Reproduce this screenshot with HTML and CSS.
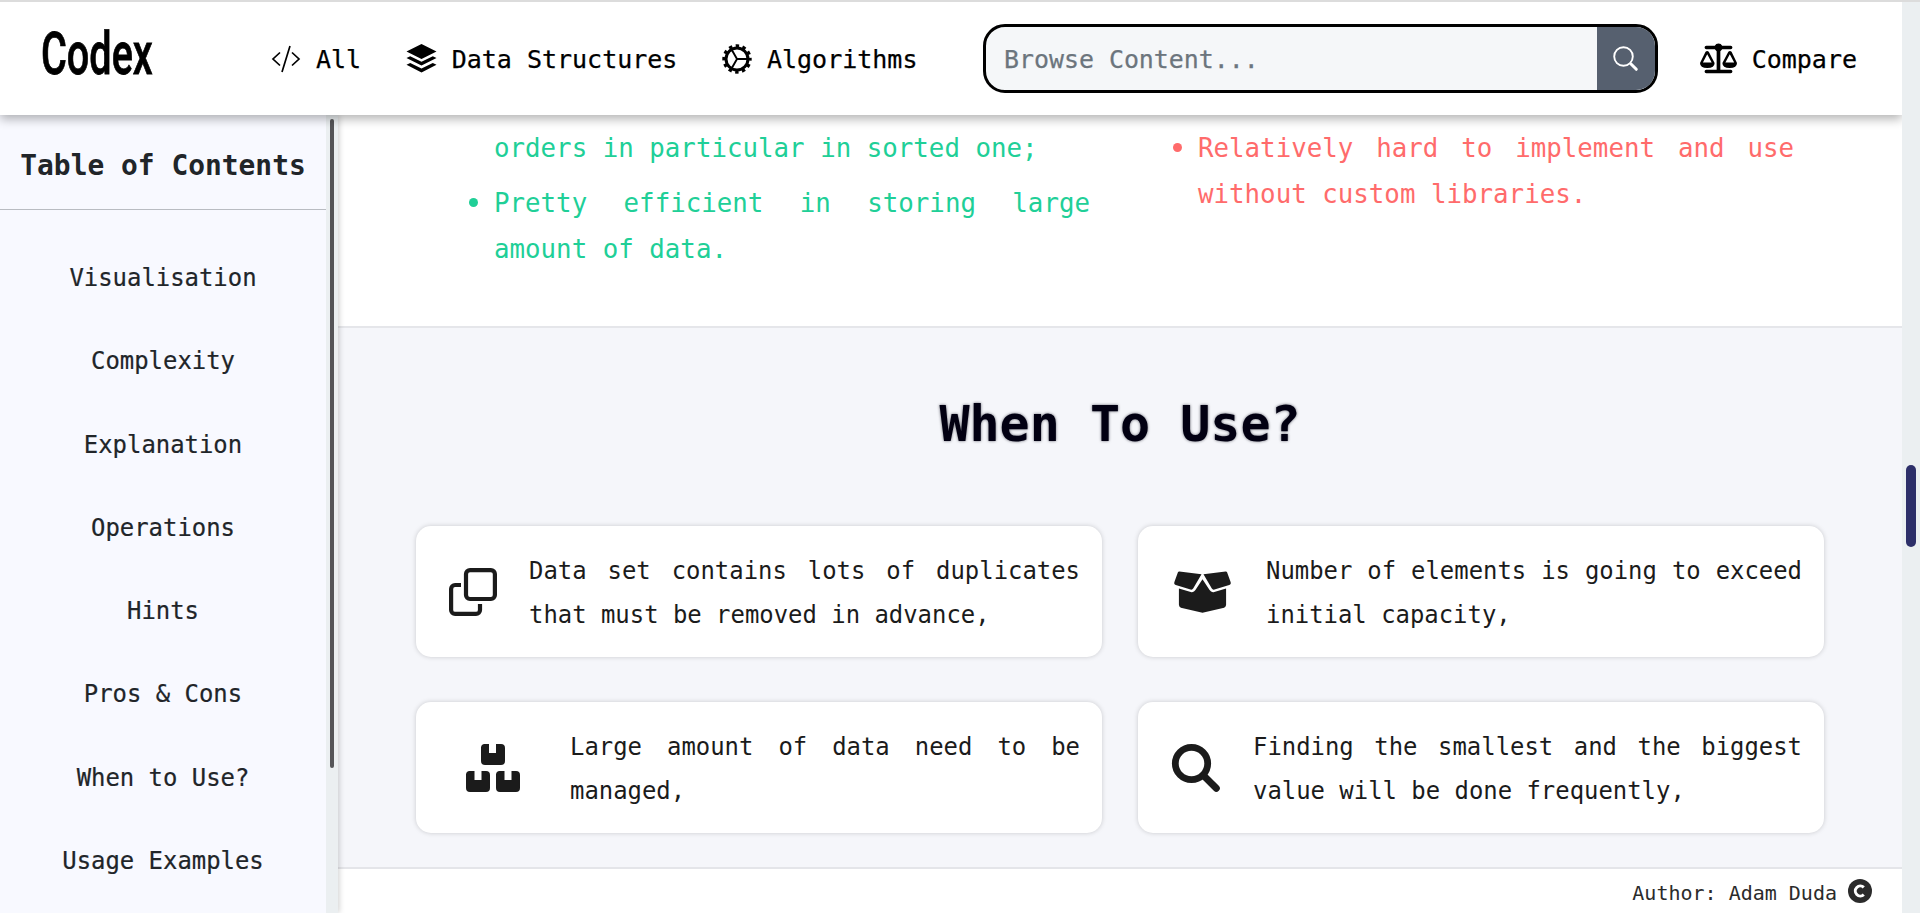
FILE: index.html
```html
<!DOCTYPE html>
<html lang="en">
<head>
<meta charset="utf-8">
<title>Codex</title>
<link rel="stylesheet" href="styles.css">
</head>
<body>
<header class="topbar">
  <div class="brand"><span class="brand-text">Codex</span></div>
  <nav class="nav">
    <a class="nav-item nav-all"><svg class="ico-code" viewBox="0 0 30 32" fill="none" stroke="currentColor" stroke-width="1.7"><path d="M9 9.500 2 16 9 22.500M21 9.500l7 6.500-7 6.500M19 3 11 29"/></svg><span>All</span></a>
    <a class="nav-item nav-ds"><svg class="ico-layers" viewBox="0 0 30 29" fill="currentColor"><path d="M15 0 30 7.500 15 15 0 7.500zM3.700 12.200 15 17.800l11.300-5.600L30 14 15 21.500 0 14zM3.700 18.900 15 24.500l11.300-5.600L30 20.700 15 28.500 0 20.700z"/></svg><span>Data Structures</span></a>
    <a class="nav-item nav-alg"><svg class="ico-gear" viewBox="0 0 30 30" fill="none" stroke="currentColor"><circle cx="15" cy="15" r="11" stroke-width="3"/><circle cx="15" cy="15" r="13.200" stroke-width="3" stroke-dasharray="3.456 3.456" stroke-dashoffset="1.728"/><path stroke-width="1.900" d="M15 15h10M15 15 10 6.300M15 15l-5 8.700"/></svg><span>Algorithms</span></a>
  </nav>
  <div class="search">
    <input class="search-input" placeholder="Browse Content...">
    <button class="search-btn" aria-label="Search"><svg class="ico-find" viewBox="0 0 25 25" fill="none" stroke="currentColor" stroke-linecap="round"><circle cx="10.500" cy="10.500" r="9.300" stroke-width="1.900"/><path stroke-width="3" d="m18 18 5.300 5.300"/></svg></button>
  </div>
  <a class="nav-item nav-cmp"><svg class="ico-scale" viewBox="0 0 38 30" fill="currentColor"><path d="M6.500 1.500h8.700a4.200 4.200 0 0 1 7.600 0h8.700a1.500 1.500 0 0 1 0 3.600h-8.700l-1.900 2V26h10.600a1.800 1.800 0 0 1 0 3.600H6.500a1.800 1.800 0 0 1 0-3.600h10.600V7.100l-1.900-2H6.500a1.500 1.500 0 0 1 0-3.600z"/><path fill-rule="evenodd" d="M5.700 7.600q1.700-1.500 3.300 0L15 19q0 5.200-7.500 5.200T0 19zM7.400 10 3 18.500h9zM29.100 7.600q1.700-1.500 3.300 0L38 19q0 5.200-7.500 5.200T23 19zM30.600 10l-4.500 8.500h9z"/></svg><span>Compare</span></a>
</header>
<div class="body">
  <aside class="sidebar">
    <div class="toc">
      <h2 class="toc-title">Table of Contents</h2>
      <ul class="toc-list">
        <li>Visualisation</li><li>Complexity</li><li>Explanation</li><li>Operations</li><li>Hints</li><li>Pros &amp; Cons</li><li>When to Use?</li><li>Usage Examples</li>
      </ul>
    </div>
    <div class="toc-track"><div class="toc-thumb"></div></div>
  </aside>
  <main class="main">
    <section class="proscons">
      <ul class="pros"><li class="cont">orders in particular in sorted one;</li><li>Pretty efficient in storing large amount of data.</li></ul>
      <ul class="cons"><li>Relatively hard to implement and use without custom libraries.</li></ul>
    </section>
    <section class="usage">
      <h1 class="title">When To Use?</h1>
      <div class="cards">
        <div class="card c1"><svg class="ico" viewBox="0 0 48 48" fill="none" stroke="currentColor" stroke-width="4.200"><rect x="17" y="2.100" width="28.900" height="28.900" rx="4"/><path d="M12 17H6.100a4 4 0 0 0-4 4v20.900a4 4 0 0 0 4 4H27a4 4 0 0 0 4-4V36"/></svg><p>Data set contains lots of duplicates that must be removed in advance,</p></div>
        <div class="card c2"><svg class="ico" viewBox="0 0 58 42" fill="currentColor"><path d="M5.500.2 28 3 19.500 17.500q-.9 1.600-2.700 1L1.800 14Q-.5 13 .5 10.500L4 1Q4.500 0 5.500.2zM52.500.2 30 3l8.500 14.500q.9 1.600 2.700 1L56.200 14q2.300-1 1.300-3.500L54 1Q53.500 0 52.500.2zM5 17.500l12 3.500q3.200.8 4.800-2L29 8l7.200 11q1.600 2.800 4.800 2L53 17.500V34q0 2.200-2 2.900L29 42 7 36.900Q5 36.200 5 34z"/></svg><p>Number of elements is going to exceed initial capacity,</p></div>
        <div class="card c3"><svg class="ico" viewBox="0 0 54 48" fill="currentColor"><path d="M18 0h5v9h7V0h5a4 4 0 0 1 4 4v13a4 4 0 0 1-4 4H19a4 4 0 0 1-4-4V4a4 4 0 0 1 3-4zM3 27h5.500v9h7v-9H20a4 4 0 0 1 4 4v13a4 4 0 0 1-4 4H4a4 4 0 0 1-4-4V31a4 4 0 0 1 3-4zM33 27h5.500v9h7v-9H50a4 4 0 0 1 4 4v13a4 4 0 0 1-4 4H34a4 4 0 0 1-4-4V31a4 4 0 0 1 3-4z"/></svg><p>Large amount of data need to be managed,</p></div>
        <div class="card c4"><svg class="ico" viewBox="0 0 48 48" fill="none" stroke="currentColor" stroke-linecap="round"><circle cx="19.500" cy="19.500" r="16.200" stroke-width="6.800"/><path stroke-width="7" d="m32 32 12.300 12.300"/></svg><p>Finding the smallest and the biggest value will be done frequently,</p></div>
      </div>
    </section>
    <footer class="footer"><span>Author: Adam Duda</span><svg class="ico-c" viewBox="0 0 24 24"><circle cx="12" cy="12" r="12" fill="currentColor"/><path d="M15.800 8.400a5 5 0 1 0 0 7.200" fill="none" stroke="#fff" stroke-width="3"/></svg></footer>
  </main>
</div>
<div class="page-track"><div class="page-thumb"></div></div>
</body>
</html>
```
FILE: styles.css
```css
* { box-sizing: border-box; }
body {
  margin: 0;
  height: 913px;
  overflow: hidden;
  display: grid;
  grid-template-columns: 1902px 18px;
  grid-template-rows: 115px 798px;
  background: #fff;
  color: #212529;
  font-family: "DejaVu Sans Mono", monospace;
  font-size: 23.920px;
}
ul, h1, h2, p { margin: 0; padding: 0; list-style: none; }
svg { display: block; flex: none; overflow: visible; }

.topbar {
  grid-column: 1;
  position: relative;
  z-index: 3;
  display: flex;
  align-items: center;
  border-top: 2px solid #dcdcdc;
  background: #fff;
  color: #000;
  box-shadow: 0 4px 10px rgba(0, 0, 0, .3);
}
.brand { width: 271px; padding-left: 41px; height: 72px; margin-bottom: 10px; }
.brand-text {
  display: inline-block;
  font: 500 60px/72px "Roboto", sans-serif;
  -webkit-text-stroke: .8px currentColor;
  transform: scaleX(.66);
  transform-origin: 0 50%;
}
.nav { display: flex; }
.nav-item { display: flex; align-items: center; gap: 15px; font-size: 25px; line-height: 36px; white-space: nowrap; -webkit-text-stroke: .25px currentColor; }
.nav-item svg { -webkit-text-stroke: 0; }
.nav-item span { padding-top: 2px; }
.nav-ds, .nav-alg { margin-left: 44.500px; }
.ico-code { width: 30px; height: 32px; }
.ico-layers { width: 31px; height: 29px; }
.ico-gear { width: 30px; height: 30px; }
.search {
  display: flex;
  position: absolute;
  left: 983px;
  top: 22px;
  width: 675px;
  height: 69px;
  border: 3px solid #000;
  border-radius: 22px;
  overflow: hidden;
  background: #f5f7f9;
}
.search-input { flex: 1; min-width: 0; border: 0; background: transparent; padding: 2px 18px 0; font: 24.900px "DejaVu Sans Mono", monospace; }
.search-input::placeholder { color: #6c757d; opacity: 1; -webkit-text-stroke: .25px #6c757d; }
.search-btn { width: 58px; border: 0; padding: 0 2px 0 0; display: grid; place-items: center; background: #56606f; color: #fff; }
.ico-find { width: 25px; height: 25px; }
.nav-cmp { margin-left: auto; margin-right: 45px; gap: 15px; }
.ico-scale { width: 37px; height: 30px; }

.body { grid-column: 1; display: grid; grid-template-columns: 338px 1fr; min-height: 0; }
.sidebar { display: flex; position: relative; z-index: 2; background: #f8f9ff; box-shadow: 1px 0 6px rgba(0, 0, 0, .2); overflow: hidden; }
.toc { width: 326px; text-align: center; -webkit-text-stroke: .2px currentColor; }
.toc-title { height: 95px; border-bottom: 1px solid #b9bcc2; font-size: 27.900px; line-height: 102px; color: #212529; white-space: nowrap; -webkit-text-stroke: 0; }
.toc-list { padding-top: 26px; }
.toc-list li { height: 83.300px; line-height: 84px; }
.toc-track { width: 12px; padding: 4px 4px 0; background: #ebeff1; }
.toc-thumb { width: 4px; height: 649px; border-radius: 2px; background: #555558; }

.main { display: grid; grid-template-rows: 211px 543px 44px; min-width: 0; }
.proscons { display: flex; gap: 108px; padding: 10px 108px 0 156px; font-size: 25.800px; line-height: 46px; text-align: justify; }
.pros { width: 596px; color: #20cf97; }
.cons { width: 596px; color: #ff6b6b; }
.proscons li { position: relative; margin-bottom: 9px; }
.proscons li:not(.cont)::before { content: ""; position: absolute; left: -25px; top: 18px; width: 9px; height: 9px; border-radius: 50%; background: currentColor; }
.usage { border-top: 2px solid #e5e6ea; border-bottom: 2px solid #e4e5e9; background: #f5f6fa; }
.title { margin-top: 54px; text-align: center; font-size: 50px; line-height: 84px; color: #020012; text-shadow: 0 0 3px rgba(2, 0, 18, .6); }
.cards { display: grid; grid-template-columns: 686px 686px; gap: 45px 36px; padding: 60px 0 0 78px; }
.card { height: 131px; display: flex; align-items: center; border-radius: 15px; background: #fff; color: #1b1b1b; box-shadow: 0 0 5px rgba(0, 0, 0, .18); padding-right: 22px; }
.card p { flex: 1; min-width: 0; line-height: 43.500px; text-align: justify; padding-top: 4px; }
.c1 { padding-left: 33px; gap: 32px; }
.c2 { padding-left: 36px; gap: 35px; }
.c3 { padding-left: 50px; gap: 50px; }
.c4 { padding-left: 34px; gap: 33px; }
.c1 .ico, .c4 .ico { width: 48px; height: 48px; }
.c2 .ico { width: 57px; height: 42px; }
.c3 .ico { width: 54px; height: 48px; }
.footer { display: flex; justify-content: flex-end; align-items: center; gap: 11px; padding-right: 30px; font-size: 20px; color: #2b2b2b; }
.footer span { padding-top: 3px; }
.ico-c { width: 24px; height: 24px; }

.page-track { grid-column: 2; grid-row: 1 / 3; position: relative; z-index: 4; border-top: 2px solid #dcdcdc; background: #ebeff1; padding: 463px 4px 0; }
.page-thumb { width: 10px; height: 82px; border-radius: 5px; background: #2d2f69; }
```
